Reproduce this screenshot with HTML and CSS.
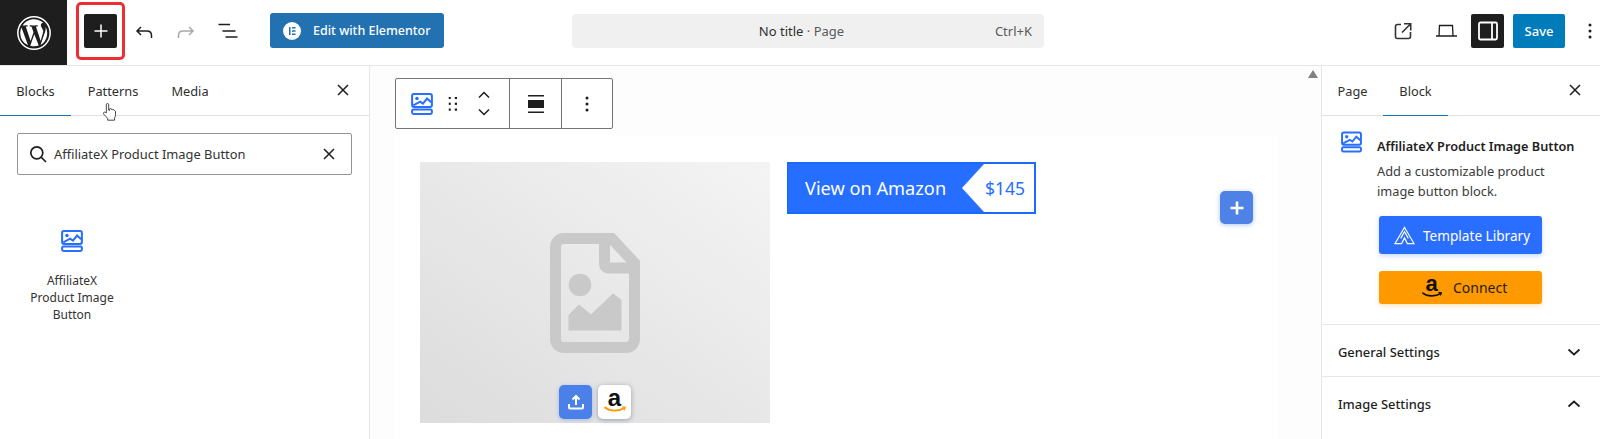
FILE: index.html
```html
<!DOCTYPE html>
<html lang="en">
<head>
<meta charset="utf-8">
<title>No title · Page</title>
<link rel="stylesheet" href="styles.css">
</head>
<body>
<svg width="0" height="0" class="defs">
  <defs>
    <symbol id="block" viewBox="0 0 24 24">
      <rect x="1.200" y="1.200" width="21.600" height="14" rx="2" fill="none" stroke="currentColor" stroke-width="2.200"/>
      <circle cx="6.500" cy="6" r="1.900" fill="currentColor"/>
      <path d="M2.500 13.500L10 9.500l3 2L17.500 6l4.500 4" fill="none" stroke="currentColor" stroke-width="2.200"/>
      <rect x="1.200" y="18" width="21.600" height="4.800" rx="1.500" fill="none" stroke="currentColor" stroke-width="2.200"/>
    </symbol>
    <symbol id="amazon" viewBox="0 0 24 24">
      <text x="11.500" y="15.500" text-anchor="middle" class="az-a">a</text>
      <path class="az-smile" d="M2 17.500c5 4 14 4 19.500.5" fill="none" stroke-width="1.800" stroke-linecap="round"/>
      <path class="az-smile" d="M19 16.800l3.200.4-1 3" fill="none" stroke-width="1.200"/>
    </symbol>
  </defs>
</svg>
<header class="topbar">
  <div class="left-tools">
    <a class="wp-logo">
      <svg viewBox="0 0 40 40" width="38" height="38"><circle cx="20" cy="20" r="17" fill="none" stroke="#fff" stroke-width="1.600"/><path fill="#fff" d="M5.500 20a14.500 14.500 0 0 0 8.200 13L6.800 14.100A14.400 14.400 0 0 0 5.500 20zM29.800 19.300c0-1.800-.6-3-1.200-4-.7-1.200-1.400-2.200-1.400-3.400 0-1.300 1-2.600 2.500-2.600h.2A14.500 14.500 0 0 0 8 12.100h.9c1.500 0 3.900-.2 3.900-.2.800 0 .9 1.100.1 1.200 0 0-.8.100-1.600.1l5.100 15.200 3.100-9.200-2.200-6c-.8 0-1.500-.1-1.500-.1-.8-.1-.7-1.200.1-1.200 0 0 2.300.2 3.700.2 1.500 0 3.900-.2 3.900-.2.800 0 .9 1.100.1 1.200 0 0-.8.100-1.600.1l5 15.100 1.400-4.800c.6-1.800 1-3.200 1-4.300zM20.300 21.300l-4.200 12.100a14.500 14.500 0 0 0 8.900-.2l-.1-.2zM32.200 13.500l.1 1.500c0 1.500-.3 3.100-1.100 5.100L26.900 32.600a14.500 14.500 0 0 0 5.300-19.100z"/></svg>
    </a>
    <div class="inserter-mark"><button class="inserter" aria-label="Add block"><svg viewBox="0 0 24 24" width="24" height="24"><path d="M11.250 5.500h1.500v5.750h5.750v1.500h-5.750v5.750h-1.500v-5.750H5.500v-1.500h5.750z" fill="#fff"/></svg></button></div>
    <svg class="tool undo" viewBox="0 0 24 24" width="24" height="24"><path d="M9 7L5 11l4 4M5 11h10c3 0 4.500 2 4.500 4.500V18" fill="none" stroke="#1e1e1e" stroke-width="1.500"/></svg>
    <svg class="tool" viewBox="0 0 24 24" width="24" height="24"><path d="M15 7l4 4-4 4M19 11H9c-3 0-4.500 2-4.500 4.500V18" fill="none" stroke="#a8a8a8" stroke-width="1.500"/></svg>
    <svg class="tool" viewBox="0 0 24 24" width="24" height="24"><path d="M2.500 4.500H14M6.500 11h13M9.500 17h12" fill="none" stroke="#1e1e1e" stroke-width="1.700"/></svg>
    <button class="elementor">
      <svg viewBox="0 0 18 18" width="18" height="18"><circle cx="9" cy="9" r="9" fill="#fff"/><path d="M6 5h1.500v8H6zM9 5h3.500v1.500H9zM9 8.250h3.500v1.500H9zM9 11.500h3.500V13H9z" fill="#2271b1"/></svg>
      <span>Edit with Elementor</span>
    </button>
  </div>
  <div class="command"><span class="command-title">No title <span class="command-sub">· Page</span></span><span class="command-key">Ctrl+K</span></div>
  <div class="right-tools">
    <svg class="tool" viewBox="0 0 24 24" width="24" height="24"><path d="M19.500 12v4.500a2 2 0 0 1-2 2h-11a2 2 0 0 1-2-2v-10a2 2 0 0 1 2-2H10M13 3.800h6.700v6.700M19.700 3.800L11 12.500" fill="none" stroke="#333" stroke-width="1.600"/></svg>
    <svg class="tool laptop" viewBox="0 0 24 24" width="24" height="24"><path d="M5.500 5.500h13l.5 10.500H5zM2 16h21" fill="none" stroke="#1e1e1e" stroke-width="1.300"/></svg>
    <button class="panel-toggle" aria-label="Settings"><svg viewBox="0 0 24 24" width="24" height="24"><rect x="3" y="3.500" width="18" height="17" rx="1.500" fill="none" stroke="#fff" stroke-width="1.800"/><path d="M16 3.500v17" stroke="#fff" stroke-width="1.800"/></svg></button>
    <button class="save">Save</button>
    <svg class="kebab" viewBox="0 0 8 24" width="8" height="24"><circle cx="4" cy="6" r="1.500"/><circle cx="4" cy="12" r="1.500"/><circle cx="4" cy="18" r="1.500"/></svg>
  </div>
</header>

<div class="workspace">
  <aside class="inserter-panel">
    <div class="tabs">
      <div class="tabs-list">
        <span class="tab tab-active">Blocks</span>
        <span class="tab tab-patterns">Patterns<svg class="cursor" viewBox="0 0 16 22" width="15" height="20"><path d="M4.500 12V3a1.300 1.300 0 0 1 2.600 0v6l1 .2V8a1 1 0 0 1 2 .2l.8.3a1 1 0 0 1 1.800.4l.8.4c.6 0 1.100.5 1.100 1.200v3.500c0 1.500-.5 2.500-1 3.500V20H6v-2L1.800 13.500c-1.300-1.700.6-3.100 1.700-2z" fill="#fff" stroke="#333" stroke-width="1"/></svg></span>
        <span class="tab tab-media">Media</span>
      </div>
      <svg class="close" viewBox="0 0 24 24" width="24" height="24"><path d="M7 7l10 10M17 7L7 17" stroke="#1e1e1e" stroke-width="1.500"/></svg>
    </div>
    <div class="search">
      <svg viewBox="0 0 24 24" width="24" height="24"><circle cx="10.800" cy="10.800" r="6" fill="none" stroke="#1e1e1e" stroke-width="1.700"/><path d="M15 15l5 5" stroke="#1e1e1e" stroke-width="1.700"/></svg>
      <span class="search-text">AffiliateX Product Image Button</span>
      <svg viewBox="0 0 24 24" width="24" height="24"><path d="M7 7l10 10M17 7L7 17" stroke="#1e1e1e" stroke-width="1.500"/></svg>
    </div>
    <div class="result">
      <svg class="blue-icon" width="22" height="24"><use href="#block"/></svg>
      <span class="result-label">AffiliateX Product Image Button</span>
    </div>
  </aside>

  <main class="canvas">
    <span class="scroll-arrow"></span>
    <div class="block-toolbar">
      <div class="bt-group bt-main">
        <svg class="blue-icon" width="22" height="24"><use href="#block"/></svg>
        <svg viewBox="0 0 10 16" width="10" height="16" class="drag"><g fill="#1e1e1e"><rect y="0" width="2.500" height="2.500"/><rect x="7" y="0" width="2.500" height="2.500"/><rect y="6.500" width="2.500" height="2.500"/><rect x="7" y="6.500" width="2.500" height="2.500"/><rect y="13" width="2.500" height="2.500"/><rect x="7" y="13" width="2.500" height="2.500"/></g></svg>
        <div class="movers">
          <svg viewBox="0 0 12 8" width="12" height="8"><path d="M1 6.500l5-5 5 5" fill="none" stroke="#1e1e1e" stroke-width="1.500"/></svg>
          <svg viewBox="0 0 12 8" width="12" height="8"><path d="M1 1.500l5 5 5-5" fill="none" stroke="#1e1e1e" stroke-width="1.500"/></svg>
        </div>
      </div>
      <div class="bt-group bt-align">
        <svg viewBox="0 0 16 18" width="16" height="18"><path d="M0 .750h16M0 17.250h16" stroke="#1e1e1e" stroke-width="1.500"/><rect y="5" width="16" height="8" fill="#1e1e1e"/></svg>
      </div>
      <div class="bt-group bt-more">
        <svg viewBox="0 0 4 16" width="4" height="16"><circle cx="2" cy="2" r="1.500" fill="#1e1e1e"/><circle cx="2" cy="8" r="1.500" fill="#1e1e1e"/><circle cx="2" cy="14" r="1.500" fill="#1e1e1e"/></svg>
      </div>
    </div>
    <div class="page">
      <div class="product-block">
        <div class="placeholder">
          <svg class="file-icon" viewBox="0 0 90 120" width="90" height="120"><path d="M14 5.500h47.700L84.500 30v76a8.500 8.500 0 0 1-8.500 8.500H14a8.500 8.500 0 0 1-8.500-8.500V14A8.500 8.500 0 0 1 14 5.500z" fill="none" stroke="#c9c9c9" stroke-width="11"/><path d="M54.500 5v26a4 4 0 0 0 4 4h26" fill="none" stroke="#c9c9c9" stroke-width="11"/><circle cx="30" cy="52" r="11.300" fill="#c9c9c9"/><path d="M19 97V82l10-10 12 10 22-21 8 6v30z" fill="#c9c9c9" stroke="#c9c9c9" stroke-width="1" stroke-linejoin="round"/></svg>
          <div class="ph-actions">
            <button class="ph-btn ph-upload" aria-label="Upload"><svg viewBox="0 0 18 18" width="18" height="18"><path d="M9 12V3M5.500 6.500L9 3l3.500 3.500M2 11v3.500a1 1 0 0 0 1 1h12a1 1 0 0 0 1-1V11" fill="none" stroke="#fff" stroke-width="2"/></svg></button>
            <button class="ph-btn ph-amazon" aria-label="Amazon"><svg width="24" height="24"><use href="#amazon"/></svg></button>
          </div>
        </div>
        <a class="amazon-btn"><span class="amazon-label">View on Amazon</span><span class="amazon-price">$145</span></a>
      </div>
      <button class="add-block" aria-label="Add block"><svg viewBox="0 0 16 16" width="16" height="16"><path d="M8 1.500v13M1.500 8h13" stroke="#fff" stroke-width="2.600"/></svg></button>
    </div>
  </main>

  <aside class="settings">
    <div class="tabs">
      <div class="tabs-list">
        <span class="tab stab">Page</span>
        <span class="tab stab tab-active">Block</span>
      </div>
      <svg class="close" viewBox="0 0 24 24" width="24" height="24"><path d="M7 7l10 10M17 7L7 17" stroke="#1e1e1e" stroke-width="1.500"/></svg>
    </div>
    <div class="block-card">
      <svg class="blue-icon card-icon" width="21" height="24"><use href="#block"/></svg>
      <div class="card-body">
        <h2 class="card-title">AffiliateX Product Image Button</h2>
        <p class="card-desc">Add a customizable product image button block.</p>
        <button class="cta cta-blue"><svg viewBox="0 0 22 20" width="21" height="19"><path d="M1 18.500L11 1.500l10 17h-7l-3-6-3 6zM7 13l4-7 4 7" fill="none" stroke="#fff" stroke-width="1.200"/></svg><span>Template Library</span></button>
        <button class="cta cta-orange"><svg width="22" height="22"><use href="#amazon"/></svg><span>Connect</span></button>
      </div>
    </div>
    <div class="panel-row"><span>General Settings</span><svg viewBox="0 0 14 8" width="14" height="8"><path d="M1.500 1.500L7 6.500l5.500-5" fill="none" stroke="#1e1e1e" stroke-width="1.700"/></svg></div>
    <div class="panel-row"><span>Image Settings</span><svg viewBox="0 0 14 8" width="14" height="8"><path d="M1.500 6.500L7 1.500l5.500 5" fill="none" stroke="#1e1e1e" stroke-width="1.700"/></svg></div>
  </aside>
</div>
</body>
</html>
```

FILE: styles.css
```css
* { box-sizing: border-box; }
html, body { margin: 0; padding: 0; height: 439px; overflow: hidden; background: #fff; }
body { font-family: "Noto Sans", "Open Sans", sans-serif; color: #1e1e1e; font-size: 13px; }
button { font-family: inherit; border: 0; padding: 0; cursor: pointer; }
svg { display: block; flex: none; }
.defs { position: absolute; }
.az-a { font: bold 24px "Liberation Sans", sans-serif; fill: #111; }
.az-smile { stroke: var(--smile, #f90); }

.topbar { height: 66px; display: flex; align-items: center; justify-content: space-between; border-bottom: 1px solid #e6e6e6; position: relative; }
.left-tools { display: flex; align-items: center; height: 65px; }
.wp-logo { width: 67px; height: 65px; background: #1e1e1e; display: flex; align-items: center; justify-content: center; }
.inserter-mark { align-self: flex-start; margin: 2px 0 0 9px; width: 49px; height: 58px; border: 3px solid #ee2e35; border-radius: 5px; display: flex; align-items: center; justify-content: center; }
.inserter { width: 33px; height: 34px; background: #1e1e1e; display: flex; align-items: center; justify-content: center; border-radius: 2px; }
.left-tools .tool { margin-left: 18px; margin-top: -1px; }
.left-tools .undo { margin-left: 6.500px; }
.elementor { align-self: flex-start; margin: 13px 0 0 30.500px; width: 174px; height: 35px; background: #2271b1; border-radius: 3px; color: #fff; font-size: 12.500px; font-weight: 500; display: flex; align-items: center; gap: 12px; padding-left: 13px; }

.command { position: absolute; left: 572px; top: 14px; width: 472px; height: 34px; background: #f0f0f0; border-radius: 4px; display: flex; align-items: center; justify-content: center; font-size: 13px; color: #2f2f2f; padding-right: 13px; }
.command-sub, .command-key { color: #5a5a5a; }
.command-key { position: absolute; right: 12px; }

.right-tools { display: flex; align-items: center; height: 65px; padding-right: 6px; }
.right-tools .tool { margin-top: -1px; }
.right-tools .laptop { margin-left: 18.500px; }
.panel-toggle { align-self: flex-start; margin: 14px 0 0 13.500px; width: 33px; height: 34px; background: #1e1e1e; border-radius: 2px; display: flex; align-items: center; justify-content: center; }
.save { align-self: flex-start; margin: 14px 0 0 9px; width: 52px; height: 34px; background: #007cba; color: #fff; border-radius: 2px; font-size: 13px; font-weight: 500; }
.kebab { margin: -4px 0 0 21px; fill: #1e1e1e; }

.workspace { display: grid; grid-template-columns: 370px 1fr 279px; height: 373px; }
.inserter-panel { border-right: 1px solid #e6e6e6; overflow: hidden; }
.tabs { height: 50px; display: flex; align-items: center; justify-content: space-between; border-bottom: 1px solid #e0e0e0; padding-right: 14px; }
.tabs-list { display: flex; height: 100%; }
.tab { position: relative; height: 100%; width: 71px; display: flex; align-items: center; justify-content: center; font-size: 12.800px; color: #2f2f2f; }
.tab-patterns { width: 84px; }
.tab-media { width: 70px; }
.tab-active::after { content: ""; position: absolute; left: 0; right: 0; bottom: -1px; height: 1.500px; background: #2271b1; }
.cursor { position: absolute; left: 31px; top: 36px; }
.close { margin-top: -2px; }

.search { margin: 17px 17px 0; height: 42px; border: 1px solid #949494; border-radius: 2px; display: flex; align-items: center; padding: 0 10px 0 8px; gap: 4px; }
.search-text { flex: 1; font-size: 12.900px; color: #333; }
.result { width: 112px; margin: 54px 0 0 16px; display: flex; flex-direction: column; align-items: center; }
.result-label { margin-top: 19px; width: 90px; text-align: center; font-size: 12px; line-height: 17px; color: #333; }
.blue-icon { color: #2a6eff; }

.canvas { background: #fdfdfd; position: relative; overflow: hidden; padding: 12px 0 0 25px; }
.scroll-arrow { position: absolute; right: 3px; top: 4px; width: 0; height: 0; border-left: 5px solid transparent; border-right: 5px solid transparent; border-bottom: 8px solid #808080; }
.block-toolbar { display: flex; width: 218px; height: 51px; background: #fff; border: 1px solid #757575; border-radius: 2px; position: relative; z-index: 2; }
.bt-group { display: flex; align-items: center; justify-content: center; height: 100%; }
.bt-group + .bt-group { border-left: 1px solid #757575; }
.bt-main { width: 113px; padding-left: 15px; justify-content: flex-start; }
.drag { margin-left: 14.500px; transform: scale(.9); }
.movers { margin-left: 20.500px; display: flex; flex-direction: column; gap: 8.500px; }
.bt-align { width: 52px; }
.bt-more { flex: 1; }

.page { margin-top: 6px; width: 882px; height: 320px; background: #fff; padding: 27px 0 0 25px; position: relative; }
.product-block { display: flex; align-items: flex-start; gap: 17px; }
.placeholder { width: 350px; height: 261px; background: linear-gradient(35deg, #dcdcdc 0%, #f4f4f4 100%); display: flex; flex-direction: column; align-items: center; position: relative; padding-top: 71px; }
.ph-actions { position: absolute; bottom: 4px; left: 139px; display: flex; gap: 6px; }
.ph-btn { width: 33px; height: 34px; border-radius: 5px; display: flex; align-items: center; justify-content: center; }
.ph-upload { background: #4a80e8; box-shadow: 0 1px 4px rgba(74,128,232,.4); }
.ph-amazon { background: #fff; box-shadow: 0 1px 5px rgba(60,70,100,.45); }
.amazon-btn { width: 249px; height: 52px; background: #266eff; border: 2px solid #1c69ff; display: flex; align-items: center; justify-content: space-between; position: relative; }
.amazon-label { color: #fff; font-size: 18.200px; padding-left: 16px; }
.amazon-price { width: 72px; height: 100%; background: #fff; clip-path: polygon(22px 0, 100% 0, 100% 100%, 22px 100%, 0 50%); color: #266eff; font-size: 17.500px; display: flex; align-items: center; justify-content: flex-end; padding-right: 9px; }
.add-block { position: absolute; left: 825px; top: 56px; width: 33px; height: 33px; background: #4f82e6; border-radius: 5px; display: flex; align-items: center; justify-content: center; box-shadow: 0 1px 5px rgba(79,130,230,.45); }

.settings { border-left: 1px solid #e6e6e6; overflow: hidden; }
.settings .tabs { padding-right: 13px; }
.stab { width: 61px; }
.stab.tab-active { width: 65px; }
.block-card { display: flex; padding: 14px 16px 0 19px; height: 209px; border-bottom: 1px solid #e6e6e6; gap: 15px; }
.card-body { flex: 1; }
.card-title { margin: 8px 0 0; font-size: 12.700px; line-height: 16px; font-weight: 600; color: #1e1e1e; }
.card-desc { margin: 8px 0 0; font-size: 12.800px; line-height: 19.500px; color: #3a3a3a; width: 200px; }
.cta { display: flex; align-items: center; border-radius: 3px; width: 163px; height: 38px; margin-left: 2px; }
.cta-blue { margin-top: 15px; background: #2a6eff; color: #fff; font-size: 13.600px; padding-left: 15px; gap: 8px; box-shadow: 0 2px 5px rgba(42,110,255,.25); }
.cta-orange { --smile: #111; margin-top: 17px; height: 33px; background: #ff9900; color: #1e1e1e; font-size: 14px; padding-left: 42px; gap: 10px; box-shadow: 0 2px 5px rgba(255,153,0,.25); }
.panel-row { height: 52px; display: flex; align-items: center; justify-content: space-between; padding: 2px 19px 0 16px; border-bottom: 1px solid #e6e6e6; font-size: 12.900px; font-weight: 500; color: #1e1e1e; }
.panel-row:last-child { border-bottom: 0; }
```
